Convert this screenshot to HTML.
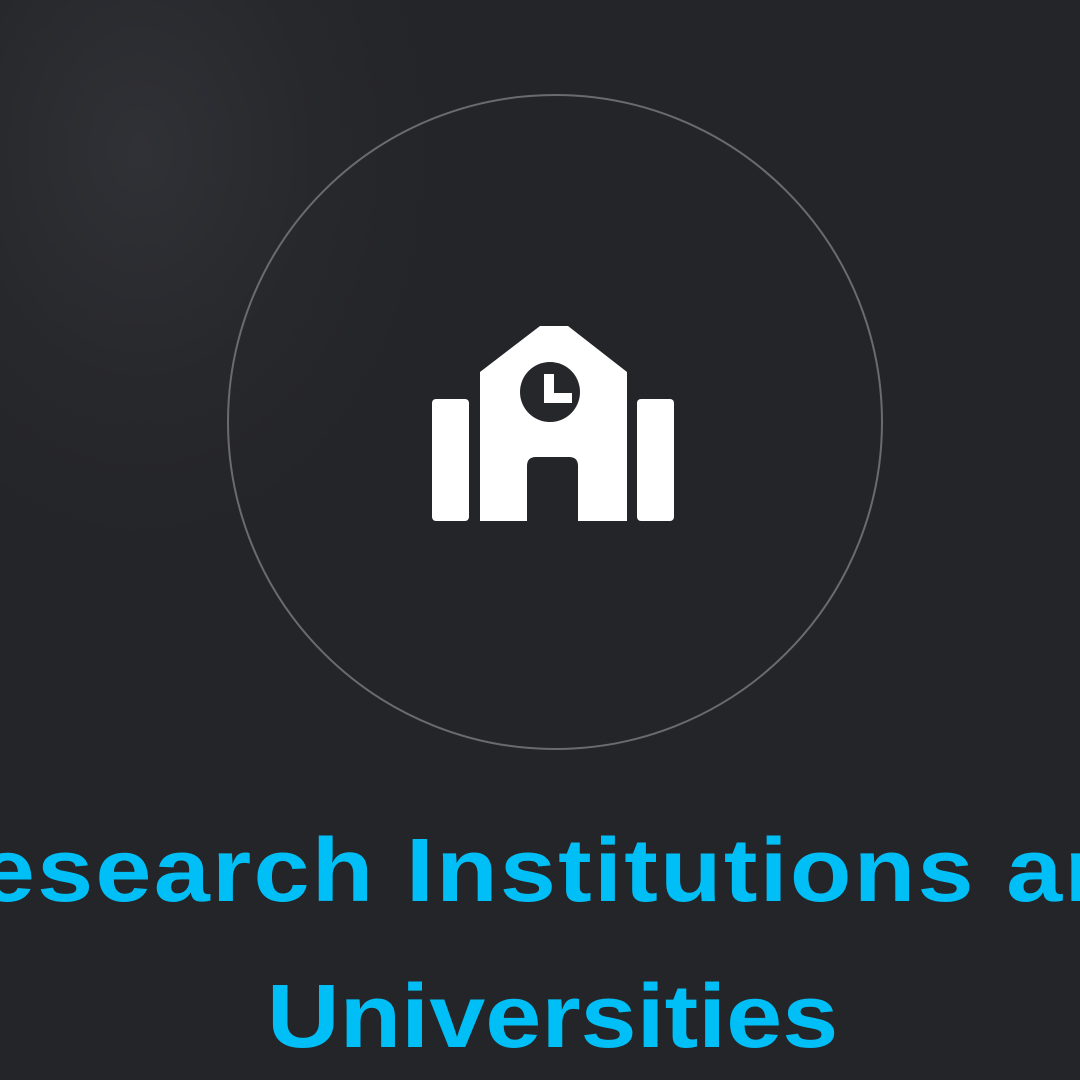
<!DOCTYPE html>
<html><head><style>
html,body{margin:0;padding:0;width:1080px;height:1080px;overflow:hidden}
body{background:radial-gradient(ellipse 300px 400px at 140px 150px,#303136 0%,#27282c 60%,#242529 100%);position:relative;font-family:"Liberation Sans",sans-serif;overflow:hidden}
.t{position:absolute;left:0;width:1080px;text-align:center;color:#00bff6;font-weight:bold;font-size:90px;white-space:nowrap;letter-spacing:2px;transform:scaleX(1.12);transform-origin:552px 0}
</style></head><body>
<svg width="1080" height="1080" style="position:absolute;left:0;top:0">
<circle cx="555" cy="422" r="327" fill="none" stroke="#6a6b6f" stroke-width="2"/>
<rect x="432" y="399" width="37" height="122" rx="4" fill="#fff"/>
<rect x="637" y="399" width="37" height="122" rx="4" fill="#fff"/>
<path d="M480 372 L540 326 L568 326 L627 372 L627 521 L578 521 L578 466 Q578 457 569 457 L536 457 Q527 457 527 466 L527 521 L480 521 Z" fill="#fff"/>
<circle cx="550" cy="392" r="30" fill="#26272b"/>
<path d="M544 374 L554 374 L554 393 L572 393 L572 403 L544 403 Z" fill="#fff"/>
</svg>
<div class="t" style="top:820px;left:-30px">Research Institutions and</div>
<div class="t" style="top:966px;left:14px;letter-spacing:0px">Universities</div>
</body></html>
